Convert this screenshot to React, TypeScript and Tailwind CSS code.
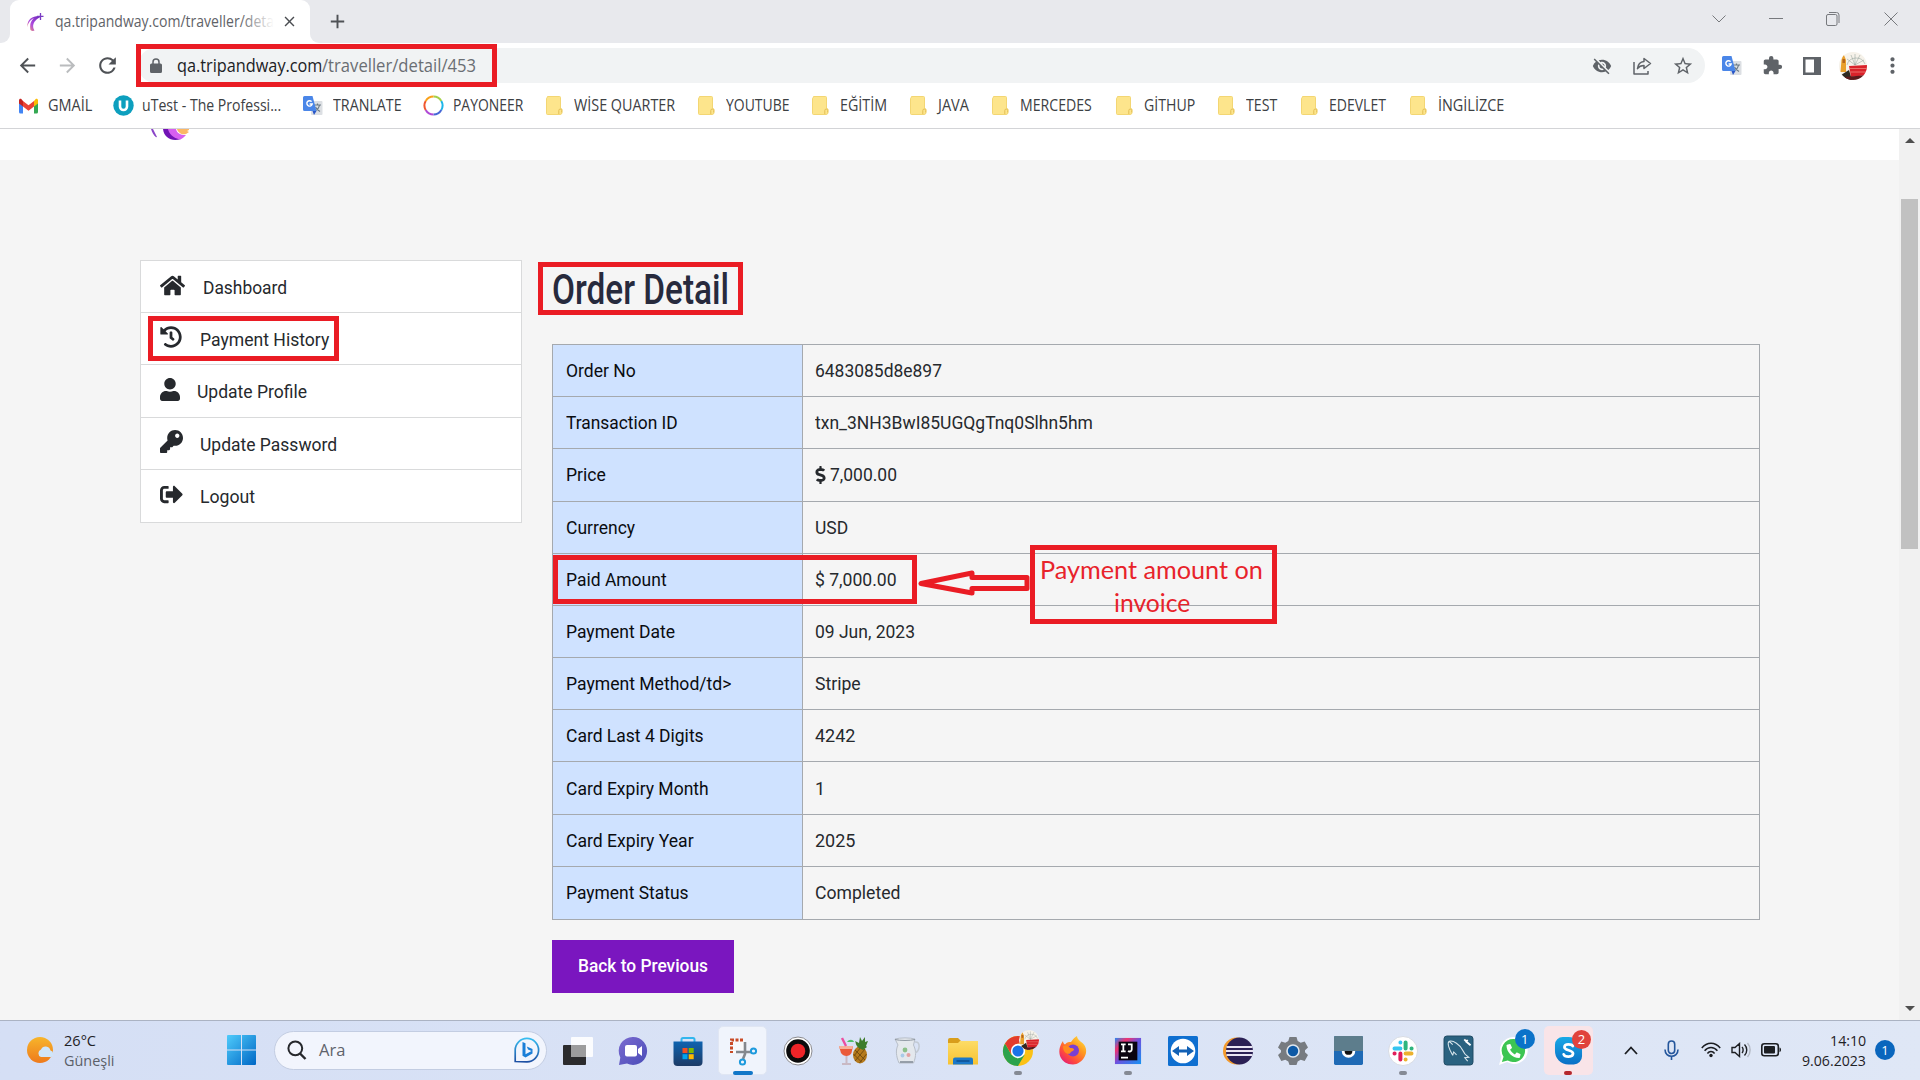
import React, { useLayoutEffect, useRef, type ReactNode } from "react";
import {
  MdArrowBack, MdArrowForward, MdRefresh, MdLock, MdVisibilityOff, MdStarBorder,
  MdExtension, MdMoreVert, MdClose, MdAdd,
} from "react-icons/md";
import { FaHome, FaHistory, FaUser, FaKey, FaSignOutAlt, FaDollarSign } from "react-icons/fa";

/** Single line of text condensed or widened to fill the width of its box. */
function Fit({ className, children }: { className: string; children: ReactNode }) {
  const outer = useRef<HTMLSpanElement>(null);
  const inner = useRef<HTMLSpanElement>(null);
  useLayoutEffect(() => {
    const fit = () => {
      if (!outer.current || !inner.current) return;
      const ratio = outer.current.clientWidth / inner.current.offsetWidth;
      inner.current.style.transform = `scaleX(${ratio})`;
    };
    fit();
    document.fonts?.ready.then(fit);
  }, []);
  return (
    <span ref={outer} className={"block shrink-0 whitespace-nowrap " + className}>
      <span ref={inner} className="inline-block origin-left">{children}</span>
    </span>
  );
}

const SEGOE = "font-['Open_Sans',sans-serif]";

function TranslateIcon() {
  return (
    <svg width="20" height="20" viewBox="0 0 20 20">
      <rect x="8" y="5" width="11.5" height="14" rx="1" fill="#dcdfe3" />
      <path d="M11 9h7M14.500 7.500v1.500M16.500 9c-.6 3-2.400 5-4.500 6M12.500 11c1 2 2.500 3.500 4.500 4.500" stroke="#6b7a86" strokeWidth="1.200" fill="none" />
      <path d="M1.500 0h8l4 15H1.500A1.500 1.500 0 0 1 0 13.500v-12A1.500 1.500 0 0 1 1.500 0z" fill="#4a86e8" />
      <path d="M9.500 15h4l-2.500 4z" fill="#2a56c6" />
      <path d="M8.600 5.600A2.700 2.700 0 1 0 9.200 8H6.600" stroke="#fff" strokeWidth="1.400" fill="none" />
    </svg>
  );
}

function FolderIcon() {
  return (
    <svg width="17" height="19" viewBox="0 0 17 19">
      <path d="M1.500.5h12a1 1 0 0 1 1 1v11l1.500.5v3.500a2 2 0 0 1-2 2H1.500a1 1 0 0 1-1-1v-15a1 1 0 0 1 1-1z" fill="#fde58c" stroke="#f3d673" />
      <path d="M12.800 18v-3.500a1.400 1.400 0 0 1 2.900 0v2" fill="#fde58c" stroke="#e3be55" />
    </svg>
  );
}

function GmailIcon() {
  return (
    <svg width="19" height="16" viewBox="0 0 19 16">
      <path d="M0 2v12a1.500 1.500 0 0 0 1.500 1.500H4V6z" fill="#4285f4" />
      <path d="M19 2v12a1.500 1.500 0 0 1-1.500 1.500H15V6z" fill="#34a853" />
      <path d="M4 3v5.500l5.500 4.200L15 8.500V3L9.500 7.200z" fill="#ea4335" />
      <path d="M0 2.500v3L4 8.500V3L2.500 1.200C1.400.4 0 1 0 2.500z" fill="#c5221f" />
      <path d="M19 2.500v3L15 8.500V3l1.500-1.800C17.600.4 19 1 19 2.500z" fill="#fbbc04" />
    </svg>
  );
}

function UTestIcon() {
  return (
    <svg width="21" height="21" viewBox="0 0 21 21">
      <circle cx="10.500" cy="10.500" r="10.200" fill="#0d9fbe" />
      <path d="M7 5.500v6a3.500 3.500 0 0 0 7 0v-6" fill="none" stroke="#fff" strokeWidth="2.600" />
    </svg>
  );
}

function PayoneerIcon() {
  return (
    <svg width="21" height="21" viewBox="0 0 21 21" fill="none" strokeWidth="2">
      <path d="M10.500 1.500a9 9 0 0 1 7.800 4.500" stroke="#a4d04a" />
      <path d="M18.300 6a9 9 0 0 1 0 9" stroke="#1cb6e8" />
      <path d="M18.300 15a9 9 0 0 1-7.800 4.500" stroke="#4667d6" />
      <path d="M10.500 19.500A9 9 0 0 1 2.700 15" stroke="#b04ad6" />
      <path d="M2.700 15a9 9 0 0 1 0-9" stroke="#f0562e" />
      <path d="M2.700 6a9 9 0 0 1 7.800-4.500" stroke="#f9a11b" />
    </svg>
  );
}

function Favicon() {
  return (
    <svg width="17" height="18" viewBox="0 0 17 18">
      <defs>
        <linearGradient id="fav" x1="1" y1="0" x2="0" y2="1">
          <stop offset="0" stopColor="#6a25b8" /><stop offset=".6" stopColor="#b04be0" /><stop offset="1" stopColor="#f6a05c" />
        </linearGradient>
      </defs>
      <path d="M13 3C6 2.500 0 6 .3 14c1.200-5 3.500-7.500 6.500-8.800C3.500 8 2.500 12 3.500 17c1 1 2.800 1.200 4 .6C5 14 5.500 8 13 4.200z" fill="url(#fav)" />
      <path d="M13.500 0v7M10 3.300h6.500" stroke="#7a3cc4" strokeWidth="1.300" />
    </svg>
  );
}

function Avatar({ className }: { className: string }) {
  return (
    <svg className={className} viewBox="0 0 28 28">
      <defs><clipPath id="av"><circle cx="14" cy="14" r="14" /></clipPath></defs>
      <g clipPath="url(#av)">
        <rect width="28" height="28" fill="#f6f2ea" />
        <g stroke="#8b9a94" strokeWidth=".5" fill="none">
          <path d="M8 13A9.500 9.500 0 0 1 26 12M16 13 12 3M16 13 16 2M16 13 21 3M16 13 25 8M16 13 8 7" />
        </g>
        <path d="M2.500 8l2-6 2.500 6v12H1.500z" fill="#e9a02c" />
        <rect x="3.500" y="7" width="2.500" height="4" fill="#b5651d" />
        <path d="M2 23l8-5 3 10H2z" fill="#2e2a22" />
        <path d="M10 14l18-1v10l-16 2z" fill="#d9222a" />
        <path d="M11 16.500h17M11 20h17" stroke="#f08078" strokeWidth=".8" />
        <path d="M6 25l22-2v5H6z" fill="#5c1a1c" />
      </g>
    </svg>
  );
}

const folders: [string, string, string][] = [
  ["WİSE QUARTER", "w-[152px]", "w-[101px]"],
  ["YOUTUBE", "w-[114px]", "w-[63px]"],
  ["EĞİTİM", "w-[98px]", "w-[47px]"],
  ["JAVA", "w-[82px]", "w-[31px]"],
  ["MERCEDES", "w-[124px]", "w-[72px]"],
  ["GİTHUP", "w-[102px]", "w-[51px]"],
  ["TEST", "w-[83px]", "w-[31px]"],
  ["EDEVLET", "w-[109px]", "w-[57px]"],
  ["İNGİLİZCE", "w-[94px]", "w-[66px]"],
];

function Bookmark({ icon, label, slot, text, iconBox }: { icon: ReactNode; label: string; slot: string; text: string; iconBox: string }) {
  return (
    <div className={"flex h-[25px] shrink-0 items-center " + slot}>
      <span className={"shrink-0 " + iconBox}>{icon}</span>
      <Fit className={text}>{label}</Fit>
    </div>
  );
}

function Browser() {
  return (
    <header className={"relative " + SEGOE}>
      <div className="flex h-[43px] bg-[#e8e9ed]">
        <div className="flex h-full w-[10px] flex-col justify-end bg-white"><div className="h-full w-full rounded-br-[9px] bg-[#e8e9ed]" /></div>
        <div className="flex h-full w-[300px] items-center rounded-t-[9px] bg-white pl-[17px]">
          <Favicon />
          <div className="relative -mt-[2px] ml-[11px] w-[219px] overflow-hidden text-[15.5px] leading-[22px] text-[#5f6368]">
            <Fit className="w-[219px]">qa.tripandway.com/traveller/deta</Fit>
            <div className="absolute inset-y-0 right-0 w-[34px] bg-linear-to-r from-white/0 to-white" />
          </div>
          <MdClose className="ml-[7px] size-[17px] text-[#4a4d51]" />
        </div>
        <div className="h-full w-[10px] bg-white"><div className="h-full w-full rounded-bl-[9px] bg-[#e8e9ed]" /></div>
        <MdAdd className="mt-[10px] ml-[6px] size-[23px] text-[#4f5256]" />
        <div className="ml-auto flex h-[37px] items-center text-[#77797d]">
          <svg width="14" height="8" viewBox="0 0 14 8" className="mr-[43px]" fill="none" stroke="currentColor"><path d="M.5.500 7 7 13.500.500" /></svg>
          <svg width="14" height="2" viewBox="0 0 14 2" className="mr-[43px]" fill="none" stroke="currentColor"><path d="M0 .5h14" /></svg>
          <svg width="14" height="14" viewBox="0 0 14 14" className="mr-[44px]" fill="none" stroke="currentColor"><rect x=".5" y="2.500" width="10.500" height="11" rx="1.500" /><path d="M3 .5h7.500a2.500 2.500 0 0 1 2.500 2.500v8" /></svg>
          <svg width="14" height="14" viewBox="0 0 14 14" className="mr-[22px]" fill="none" stroke="currentColor"><path d="M.5.500l13 13M13.500.500l-13 13" /></svg>
        </div>
      </div>
      <div className="flex h-[45px] items-center bg-white pl-[16px] text-[#5f6368]">
        <MdArrowBack className="size-[23px] text-[#4f5256]" />
        <MdArrowForward className="ml-[17px] size-[23px] text-[#babcbe]" />
        <MdRefresh className="ml-[16px] size-[25px] text-[#4f5256]" />
        <div className="ml-[18px] flex h-[35px] w-[1567px] items-center rounded-full bg-[#f1f3f4] pl-[11px]">
          <svg width="12" height="15" viewBox="0 0 12 15" className="mr-[2px] ml-px"><path d="M1.500 5.500h9A1.500 1.500 0 0 1 12 7v6.500a1.500 1.500 0 0 1-1.500 1.500h-9A1.500 1.500 0 0 1 0 13.500V7a1.500 1.500 0 0 1 1.500-1.500z" fill="#5f6368" /><path d="M3 6V4a3 3 0 0 1 6 0v2" fill="none" stroke="#5f6368" strokeWidth="1.500" /></svg>
          <div className="-mt-px ml-[13px] flex w-[300px] text-[17.5px] leading-[24px]">
            <Fit className="w-[145px] text-[#202124]">qa.tripandway.com</Fit>
            <Fit className="w-[154px] text-[#6a6e73]">/traveller/detail/453</Fit>
          </div>
          <div className="ml-auto flex items-center">
            <MdVisibilityOff className="mr-[21px] size-[20px]" />
            <svg width="19" height="18" viewBox="0 0 19 18" fill="none" stroke="currentColor" strokeWidth="1.500" className="mr-[20px]">
              <path d="M1 5v12h14v-3M11 1.500l6.500 5-6.500 5V8.600c-3 0-5 1-6.500 3C5 7.500 7.200 5 11 4.600z" strokeLinejoin="round" />
            </svg>
            <MdStarBorder className="mr-[11px] size-[22px]" />
          </div>
        </div>
        <div className="ml-[17px]"><TranslateIcon /></div>
        <MdExtension className="ml-[20px] size-[21px]" />
        <svg width="18" height="18" viewBox="0 0 18 18" className="ml-[20px]"><path d="M0 0h18v18H0zM2.500 2.500v13H11v-13z" fill="#5f6368" fillRule="evenodd" /></svg>
        <Avatar className="ml-[18px] size-[28px]" />
        <MdMoreVert className="ml-[13px] size-[25px]" />
      </div>
      <div className="flex h-[41px] items-start border-b border-[#d3d4d7] bg-white pt-[5px] pl-[19px] text-[15.5px] leading-[25px] text-[#3c4043]">
        <Bookmark icon={<GmailIcon />} label="GMAİL" slot="w-[94px]" text="w-[44px]" iconBox="w-[29px]" />
        <Bookmark icon={<UTestIcon />} label="uTest - The Professi..." slot="w-[190px]" text="w-[139px]" iconBox="w-[29px]" />
        <Bookmark icon={<TranslateIcon />} label="TRANLATE" slot="w-[120px]" text="w-[69px]" iconBox="w-[30px]" />
        <Bookmark icon={<PayoneerIcon />} label="PAYONEER" slot="w-[123px]" text="w-[70px]" iconBox="w-[30px]" />
        {folders.map(([label, slot, text]) => (
          <Bookmark key={label} icon={<FolderIcon />} label={label} slot={slot} text={text} iconBox="w-[28px]" />
        ))}
      </div>
      <div className="absolute top-[44px] left-[136px] h-[43px] w-[361px] border-5 border-[#ea1c24]" />
    </header>
  );
}

const menu: { label: string; icon: ReactNode; text: string }[] = [
  { label: "Dashboard", icon: <FaHome className="h-[23px] w-[25px]" />, text: "ml-[18px] w-[84px]" },
  { label: "Payment History", icon: <FaHistory className="size-[22px]" />, text: "ml-[18px] w-[129px]" },
  { label: "Update Profile", icon: <FaUser className="h-[23px] w-[20px]" />, text: "ml-[17px] w-[110px]" },
  { label: "Update Password", icon: <FaKey className="size-[23px]" />, text: "ml-[17px] w-[137px]" },
  { label: "Logout", icon: <FaSignOutAlt className="size-[23px]" />, text: "ml-[17px] w-[55px]" },
];

const rows: { label: string; lw: string; value: ReactNode }[] = [
  { label: "Order No", lw: "w-[70px]", value: <Fit className="w-[127px]">6483085d8e897</Fit> },
  { label: "Transaction ID", lw: "w-[112px]", value: <Fit className="w-[278px]">txn_3NH3BwI85UGQgTnq0Slhn5hm</Fit> },
  { label: "Price", lw: "w-[40px]", value: <div className="flex items-center"><FaDollarSign className="mr-[4px] h-[18px] w-[11px]" /><Fit className="w-[67px]">7,000.00</Fit></div> },
  { label: "Currency", lw: "w-[69px]", value: <Fit className="w-[33px]">USD</Fit> },
  { label: "Paid Amount", lw: "w-[101px]", value: <Fit className="w-[82px]">$ 7,000.00</Fit> },
  { label: "Payment Date", lw: "w-[109px]", value: <Fit className="w-[100px]">09 Jun, 2023</Fit> },
  { label: "Payment Method/td>", lw: "w-[165px]", value: <Fit className="w-[46px]">Stripe</Fit> },
  { label: "Card Last 4 Digits", lw: "w-[138px]", value: <Fit className="w-[40px]">4242</Fit> },
  { label: "Card Expiry Month", lw: "w-[143px]", value: "1" },
  { label: "Card Expiry Year", lw: "w-[128px]", value: <Fit className="w-[40px]">2025</Fit> },
  { label: "Payment Status", lw: "w-[123px]", value: <Fit className="w-[85px]">Completed</Fit> },
];

function Page() {
  return (
    <div className="relative flex h-[891px] bg-[#f5f5f5] font-[Roboto,sans-serif] text-[18px] leading-[27px]">
      <div className="w-[1899px]">
        <div className="h-[31px] bg-white pl-[151px]">
          <svg width="42" height="12" viewBox="0 0 42 12">
            <path d="M0 0h2l4 8-1 .3C2.500 6 1 3 0 0z" fill="#8a45c8" />
            <path d="M12 0h8c0 5 3 8 10 10-9 3-17-1-18-10z" fill="#7113b4" />
            <path d="M17 0h8c1 4 4 6 10 6-2 2-3.500 3.500-6 4.500C22 9 18 5 17 0z" fill="#d75ff0" />
            <path d="M26 0h12v1l-2 1 2 1-3 2c-4 1-8-1-9-5z" fill="#fbb765" />
          </svg>
        </div>
        <div className="flex pt-[100px] pl-[140px]">
          <nav className="relative h-[263px] w-[382px] border border-[#d9dadb] bg-white text-[#26292d]">
            <div className="grid h-full grid-rows-5 divide-y divide-[#d9dadb]">
              {menu.map((m) => (
                <div key={m.label} className="flex items-center pl-[19px]">
                  <span className="-mt-[3px] shrink-0">{m.icon}</span>
                  <Fit className={"mt-[2px] " + m.text}>{m.label}</Fit>
                </div>
              ))}
            </div>
            <div className="absolute top-[55px] left-[7px] h-[45px] w-[191px] border-5 border-[#ea1c24]" />
          </nav>
          <main className="relative ml-[30px] w-[1208px]">
            <h1 className="flex h-[84px] pt-[5px] text-[43px] leading-[48px] font-medium text-[#272a3d]"><Fit className="w-[177px]">Order Detail</Fit></h1>
            <div className="grid h-[576px] grid-rows-11 divide-y divide-[#a5a9ae] border border-[#a5a9ae]">
              {rows.map((r) => (
                <div key={r.label} className="flex">
                  <div className="flex w-[250px] items-center border-r border-[#a5a9ae] bg-[#cfe2ff] pl-[12.5px] text-[#0a0c10]"><Fit className={r.lw}>{r.label}</Fit></div>
                  <div className="flex items-center pl-[12px] text-[#26292d]">{r.value}</div>
                </div>
              ))}
            </div>
            <button className="mt-[20px] flex h-[53px] w-[182px] items-center justify-center bg-[#7a16bf] pb-[2px] font-medium text-white"><Fit className="w-[130px]">Back to Previous</Fit></button>
            <div className="absolute top-[2px] -left-[14px] h-[53px] w-[205px] border-5 border-[#ea1c24]" />
            <div className="absolute top-[295px] left-[1px] h-[49px] w-[364px] border-5 border-[#ea1c24]" />
            <svg className="absolute top-[308px] left-[363px]" width="116" height="30" viewBox="0 0 116 30">
              <path d="M6 15.500 57 5v4.500H112v11H57v4.500z" fill="none" stroke="#ea1c24" strokeWidth="5" strokeLinejoin="round" />
            </svg>
            <div className="absolute top-[285px] left-[478px] flex h-[79px] w-[247px] flex-col items-center border-5 border-[#ea1c24] pt-[3px] pr-[4px] font-[Lato,sans-serif] text-[25px] leading-[33px] text-[#e8232b]">
              <Fit className="w-[223px]">Payment amount on</Fit>
              <Fit className="w-[76px]">invoice</Fit>
            </div>
          </main>
        </div>
      </div>
      <div className="flex w-[21px] flex-col items-center bg-[#f1f1f1]">
        <svg width="10" height="5" viewBox="0 0 10 5" className="mt-[9px]"><path d="M0 5 5 0l5 5z" fill="#4f4f4f" /></svg>
        <div className="mt-[56px] h-[350px] w-[17px] bg-[#c1c1c1]" />
        <svg width="10" height="5" viewBox="0 0 10 5" className="mt-auto mb-[9px]"><path d="M0 0l5 5 5-5z" fill="#4f4f4f" /></svg>
      </div>
    </div>
  );
}

const I = ({ children, s = 30 }: { children: ReactNode; s?: number }) => (
  <svg width={s} height={s} viewBox="0 0 30 30" className="overflow-visible">{children}</svg>
);

const apps: { name: string; icon: ReactNode; bar?: string; tile?: string }[] = [
  { name: "taskview", icon: <I><rect y="9" width="23" height="20" rx="1" fill="#2b2b2d" /><rect x="8" y="1" width="22" height="20" rx="1" fill="#fff" opacity=".9" /><rect x="8" y="9" width="15" height="12" fill="#9c9c9d" /></I> },
  { name: "chat", icon: <I><defs><linearGradient id="ch" x2="1" y2="1"><stop stopColor="#7b6bd0" /><stop offset="1" stopColor="#4a4cb8" /></linearGradient></defs><path d="M15 1a14 14 0 1 1-6 26.600L1 29l1.300-7.500A14 14 0 0 1 15 1z" fill="url(#ch)" /><rect x="7" y="9" width="12" height="11.500" rx="2" fill="#fff" /><path d="M20 13l4-3v10l-4-3z" fill="#fff" /></I> },
  { name: "store", icon: <I><path d="M8.500 7V3.500A1.500 1.500 0 0 1 10 2h10a1.500 1.500 0 0 1 1.500 1.500V7" fill="none" stroke="#32b6ee" strokeWidth="2" /><defs><linearGradient id="st" x2="0" y2="1"><stop stopColor="#0f63b0" /><stop offset="1" stopColor="#1d3b66" /></linearGradient></defs><path d="M.5 5.500h29V26a4 4 0 0 1-4 4h-21a4 4 0 0 1-4-4z" fill="url(#st)" /><path d="M9.500 12h5v5h-5z" fill="#f25022" /><path d="M15.700 12h5v5h-5z" fill="#7fba00" /><path d="M9.500 18.200h5v5h-5z" fill="#00a4ef" /><path d="M15.700 18.200h5v5h-5z" fill="#ffb900" /></I> },
  { name: "snip", tile: "bg-[#f0f4fc] border border-[#e0e6f3]", bar: "w-[20px] bg-[#1277c8]", icon: <I><rect x="4" y="4" width="13" height="13" fill="#f9f9fb" /><path d="M15 4H3.500v13" fill="none" stroke="#c94b26" strokeWidth="3" strokeDasharray="3 1.500" /><path d="M17 6v12l-2 5M8 16h15" stroke="#84888e" fill="none" strokeWidth="2.600" /><circle cx="25.500" cy="15" r="2.600" fill="none" stroke="#1d9add" strokeWidth="2" /><circle cx="14.500" cy="26" r="2.600" fill="none" stroke="#1d9add" strokeWidth="2" /></I> },
  { name: "record", icon: <I><circle cx="15" cy="15" r="14" fill="#fff" stroke="#8c8c90" /><circle cx="15" cy="15" r="11.800" fill="#0b0b0b" /><circle cx="15" cy="15" r="7.300" fill="#ee2428" /></I> },
  { name: "fruit", icon: <I><ellipse cx="22" cy="19" rx="7" ry="8.500" fill="#b57a1c" /><path d="M17 14l10 10M15.500 18l8 8M27 13 17 25M23 11l-7 9M28.500 18l-7 9" stroke="#6f4a10" strokeWidth=".9" /><path d="M21 12c-4-3-3-6-4-7l4 2 1-6 2 4 3-4v5l3-1-2 5 1 1-4 3z" fill="#3e7d2c" /><path d="M1 10h14l-1.500 7c-2 4-8 4-10.500 0z" fill="#ea5a3a" /><path d="M1 10h14l-.8 3H1.800z" fill="#f7b29a" /><path d="M8.500 20v7M4 28h9" stroke="#c9b9c4" strokeWidth="2" /><path d="M8 10 4 2" stroke="#ec4fa0" strokeWidth="2.400" /><path d="M9 6c2-3 6-3 7 0z" fill="#4fc16b" /></I> },
  { name: "jug", icon: <I><path d="M2 3c5-1.500 15-1.500 20 0l-1.500 6c2.500 5 3 11 0 18H6C3 20 2.500 14 5 9z" fill="#e4e8ed" stroke="#b7bec8" strokeWidth="1" /><path d="M2 3.500c5 1.300 15 1.300 20 0" fill="none" stroke="#8f98a3" strokeWidth="1" /><path d="M22 6c6-1 5 9 0 11" fill="none" stroke="#c3cad3" strokeWidth="1.500" /><circle cx="12" cy="14" r="2.400" fill="#8cc08a" /><circle cx="15.500" cy="19" r="2" fill="#e3a0a0" /><circle cx="9.500" cy="19.500" r="1.900" fill="#a9cbe8" /><path d="M7 26h13" stroke="#8e97a2" strokeWidth="1.800" /></I> },
  { name: "files", icon: <I><path d="M0 4a2 2 0 0 1 2-2h8l3 3v5H0z" fill="#d99e1b" /><defs><linearGradient id="fl" x2="0" y2="1"><stop stopColor="#fddc66" /><stop offset="1" stopColor="#f7c232" /></linearGradient></defs><path d="M0 7h10l2-2h18v23.500H0z" fill="url(#fl)" /><path d="M5 28.500v-5a2 2 0 0 1 2-2h16a2 2 0 0 1 2 2v5z" fill="#1b78c9" /><path d="M8.500 25h13" stroke="#0e4f91" strokeWidth="1.500" /></I> },
  { name: "chrome", bar: "w-[8px] bg-[#858a94]", icon: <div className="relative"><I><circle cx="15" cy="15" r="15" fill="#fbc116" /><path d="M2 7.500A15 15 0 0 0 15 30l6.500-11L8.500 19z" fill="#2ba24c" /><path d="M2 7.500a15 15 0 0 1 26 0H15L8.500 18.500z" fill="#e33b2e" /><circle cx="15" cy="15" r="7.200" fill="#fff" /><circle cx="15" cy="15" r="5.600" fill="#1a73e8" /></I><Avatar className="absolute -top-[6px] -right-[6px] size-[20px]" /></div> },
  { name: "firefox", icon: <I><defs><linearGradient id="ff" x1="1" y1="0" x2=".2" y2="1"><stop stopColor="#fff04a" /><stop offset=".4" stopColor="#ff9a1f" /><stop offset=".75" stopColor="#ff4a3d" /><stop offset="1" stopColor="#e21c78" /></linearGradient></defs><path d="M5 5c0 2 1 3 2 3.500C9 6 11 6 13 6c2-3 4-5 6-6 0 3 3 5 6 7.500 8 8-.5 21-10 21C3 28.500-3 16 5 5z" fill="url(#ff)" /><circle cx="15" cy="14.500" r="6" fill="#7a3fd3" /><path d="M5 10c4-1.500 6 0 7 2 2 0 4 0 4 1.500s-3 1.500-4 4c-3 1-7-1-7-7.500z" fill="#ff8a1e" /></I> },
  { name: "intellij", bar: "w-[8px] bg-[#858a94]", icon: <I s={28}><defs><linearGradient id="ij" x2="1" y2="1"><stop stopColor="#2489f5" /><stop offset=".25" stopColor="#f0326e" /><stop offset=".5" stopColor="#6c52e0" /><stop offset="1" stopColor="#1593f2" /></linearGradient></defs><path d="M1 1h28v28H1z" fill="url(#ij)" /><path d="M5 5h20v20H5z" fill="#0a0410" /><path d="M7.500 8h5M10 8v7M7.500 15.500h5M15 8h4v5.500c0 2-2.500 2.500-4 1.500M7.500 22h7.500" stroke="#fff" strokeWidth="1.900" fill="none" /></I> },
  { name: "teamviewer", icon: <I><rect width="30" height="30" rx="1.500" fill="#0f6fd0" /><circle cx="15" cy="15" r="12.300" fill="#fff" /><path d="M4 15l7-5v3.400h8V10l7 5-7 5v-3.400h-8V20z" fill="#1261b5" /></I> },
  { name: "eclipse", icon: <I><circle cx="13.500" cy="15" r="13.500" fill="#f39a2c" /><circle cx="16.500" cy="15" r="13.500" fill="#2b2055" /><path d="M3.500 11h26M3 15h27M3.500 19h26" stroke="#e9e5f3" strokeWidth="1.900" /></I> },
  { name: "settings", icon: <I><path d="M11.500 1h7l1.200 4 3 1.700 4-1.200 3.300 6-3 2.700v2l3 2.700-3.300 6-4-1.200-3 1.700-1.200 3.600h-7l-1.200-3.600-3-1.700-4 1.200-3.300-6 3-2.700v-2l-3-2.700 3.300-6 4 1.200 3-1.700z" fill="#777b80" /><circle cx="15" cy="15" r="6" fill="#0e59a5" stroke="#dfe6ee" strokeWidth="1.600" /></I> },
  { name: "owl", icon: <I s={29}><rect width="30" height="30" rx="1.500" fill="#1f6ab5" /><path d="M0 15.500V1.500A1.500 1.500 0 0 1 1.500 0h27A1.500 1.500 0 0 1 30 1.500v14z" fill="#5d7d8c" /><path d="M8 15.500a7 7 0 0 0 14 0z" fill="#fff" /><path d="M11 15.500a4 4 0 0 0 8 0z" fill="#111" /></I> },
  { name: "slack", bar: "w-[8px] bg-[#858a94]", icon: <I><circle cx="15" cy="15" r="14.500" fill="#fff" stroke="#d2d6dd" strokeWidth=".8" /><g strokeWidth="4" strokeLinecap="round"><path d="M12.400 6.500v.1M6.500 12.400h5.900" stroke="#36c5f0" /><path d="M17.600 6.500v5.900M23.500 12.400h.1" stroke="#2eb67d" /><path d="M17.600 17.600h5.900M17.600 23.500v.1" stroke="#ecb22e" /><path d="M12.400 17.600v5.900M6.500 17.600h.1" stroke="#e01e5a" /></g></I> },
  { name: "mysql", icon: <I s={29}><rect width="30" height="30" rx="3" fill="#2a6280" stroke="#1f4b63" /><path d="M9 20C5 13 3 7 5.500 5.500 9 4 17 9 19.500 15c1 3 2.500 4.500 6 7l-4 .5 3 3.500M9 20l1-3.500 3 3M5.500 5.500 9 9" fill="none" stroke="#d9e6ec" strokeWidth="1.100" /><path d="M21 3.500l2 2 1.500-1.500M22.500 5.500l5 4" stroke="#fff" strokeWidth="2" /></I> },
  { name: "whatsapp", icon: <div className="relative"><I s={29}><path d="M15 1a14 14 0 1 1-6.500 26L0 30l2.500-8.500A14 14 0 0 1 15 1z" fill="#fff" /><path d="M15 3a12 12 0 1 1-6 22.400l-6 1.600 1.700-5.600A12 12 0 0 1 15 3z" fill="#3dc552" /></I><svg className="absolute top-[8px] left-[7px]" width="15" height="14" viewBox="0 0 512 512"><path d="M493 24 389 0c-11-3-23 3-27 14l-48 112c-4 10-1 21 7 28l61 50c-36 77-99 140-178 178l-50-61c-7-8-18-11-28-7L14 362C4 367-3 378 1 390l24 104c3 11 13 18 24 18 256 0 463-207 463-464 0-11-8-21-19-24z" fill="#fff" transform="matrix(-1 0 0 1 512 0)" /></svg><span className="absolute -top-[7px] -right-[7px] flex size-[20px] items-center justify-center rounded-full bg-[#0a72c9] text-[13px] leading-none text-white">1</span></div> },
  { name: "skype", tile: "bg-[#f9e4e8]", bar: "w-[8px] bg-[#b4262c]", icon: <div className="relative"><I s={29}><defs><linearGradient id="sk" x2="0" y2="1"><stop stopColor="#19a9e6" /><stop offset="1" stopColor="#0a6fc6" /></linearGradient></defs><path d="M9 1h6a14 14 0 0 1 14 15v5a8.500 8.500 0 0 1-8.500 8.500H15A14 14 0 0 1 1 15V9a8 8 0 0 1 8-8z" fill="url(#sk)" /><path d="M19.500 10.500C18.500 8.500 11 7.500 10.800 11.500c-.2 4 8.900 2.500 8.900 6.700s-8.500 4-9.700.8" fill="none" stroke="#fff" strokeWidth="2.800" strokeLinecap="round" /></I><span className="absolute -top-[6px] -right-[8px] flex size-[19px] items-center justify-center rounded-full bg-[#e0433c] text-[13px] leading-none text-white">2</span></div> },
];

function Taskbar() {
  return (
    <footer className={"flex h-[60px] items-center border-t border-[#abb3c3] bg-linear-to-r from-[#d5dff5] to-[#dfe7f6] pb-px " + SEGOE}>
      <svg width="29" height="28" viewBox="0 0 29 28" className="ml-[27px]">
        <defs><linearGradient id="sun" x2="0" y2="1"><stop stopColor="#f7b52b" /><stop offset="1" stopColor="#ee7a1c" /></linearGradient></defs>
        <circle cx="13" cy="14" r="13" fill="url(#sun)" />
        <path d="M14 21a4 4 0 0 1 0-7.500 5 5 0 0 1 9.500 1A3.400 3.400 0 0 1 24 21z" fill="#cfe6fa" />
      </svg>
      <div className="-mt-px ml-[8px] flex flex-col text-[15px] leading-[20px]">
        <Fit className="w-[32px] text-[#1f2226]">26°C</Fit>
        <Fit className="w-[50px] text-[#5b6068]">Güneşli</Fit>
      </div>
      <svg width="29" height="30" viewBox="0 0 29 30" className="ml-[113px]">
        <defs><linearGradient id="win" x2="1" y2="1"><stop stopColor="#4fcbfb" /><stop offset="1" stopColor="#0067c5" /></linearGradient></defs>
        <path d="M0 1a1 1 0 0 1 1-1h13v14.500H0zM15 0h13a1 1 0 0 1 1 1v13.500H15zM0 15.500h14V30H1a1 1 0 0 1-1-1zM15 15.500h14V29a1 1 0 0 1-1 1H15z" fill="url(#win)" />
      </svg>
      <div className="ml-[18px] flex h-[39px] w-[273px] items-center rounded-full border border-[#c3cde2] bg-[#f2f5fd] pl-[12px]">
        <svg width="20" height="20" viewBox="0 0 20 20" fill="none" stroke="#26282c" strokeWidth="2"><circle cx="8.300" cy="8.300" r="6.900" /><path d="M13 13.500l5.500 5.500" strokeWidth="2.400" /></svg>
        <Fit className="ml-[12px] w-[26px] text-[16.5px] text-[#5f636b]">Ara</Fit>
        <svg width="26" height="26" viewBox="0 0 26 26" className="mr-[6px] ml-auto">
          <defs><linearGradient id="bi" x2="0" y2="1"><stop stopColor="#38bdf0" /><stop offset="1" stopColor="#1d4fa3" /></linearGradient></defs>
          <path d="M1.200 24.500V13A11.700 11.700 0 1 1 13 24.800z" fill="none" stroke="url(#bi)" strokeWidth="1.700" />
          <path d="M8.500 5l3 1.300v11l6-3.300-3.500-1.500-1.200-3 5.700 2.500v4.500l-7 4-3-1.800z" fill="#1b7fd8" />
        </svg>
      </div>
      <div className="ml-[3px] -mb-px flex h-[59px] w-[1046px] shrink-0">
        {apps.map((a) => (
          <div key={a.name} className="relative flex flex-1 justify-center">
            <div className={"relative mt-[5px] flex h-[49px] w-[49px] items-center justify-center rounded-[5px] " + (a.tile ?? "")}>
              {a.icon}
            </div>
            {a.bar && <div className={"absolute bottom-[5px] h-[4px] rounded-full " + a.bar} />}
          </div>
        ))}
      </div>
      <div className="ml-[28px] flex items-center text-[#1c1e22]">
        <svg width="14" height="9" viewBox="0 0 14 9" fill="none" stroke="currentColor" strokeWidth="1.800"><path d="M1 8l6-6.500L13 8" /></svg>
        <svg width="15" height="20" viewBox="0 0 15 20" fill="none" stroke="#24569c" strokeWidth="1.600" className="ml-[26px]"><rect x="4.300" y="1" width="6.400" height="12.500" rx="3.200" /><path d="M1 9.500c0 9 13 9 13 0M7.500 16.300V20" /></svg>
        <svg width="20" height="16" viewBox="0 0 20 16" fill="none" stroke="currentColor" strokeWidth="1.500" className="ml-[22px]"><path d="M.8 6C6-.4 14-.4 19.200 6M3.600 8.800c3.600-4.500 9.200-4.500 12.800 0M6.400 11.500c2-2.600 5.200-2.600 7.200 0" /><circle cx="10" cy="13.500" r="1.700" fill="currentColor" stroke="none" /></svg>
        <svg width="21" height="16" viewBox="0 0 21 16" fill="none" stroke="currentColor" strokeWidth="1.400" className="ml-[10px]"><path d="M1 5.500h3L8.500 1.500v13L4 10.500H1zM11 5c1.500 1.500 1.500 4.500 0 6M13.500 2.500c3 3 3 8 0 11" /><path d="M16.500 1c3.500 4 3.500 10 0 14" stroke="#b3b9c4" /></svg>
        <svg width="21" height="14" viewBox="0 0 21 14" className="ml-[9px]"><rect x=".8" y=".8" width="16.500" height="12" rx="2.500" fill="none" stroke="currentColor" strokeWidth="1.600" /><rect x="3" y="3" width="11" height="7.600" rx="1" fill="currentColor" /><path d="M18.500 4.500c2 .3 2 4.300 0 4.600z" fill="currentColor" /></svg>
      </div>
      <div className="-mt-px ml-[20px] flex w-[64px] flex-col items-end text-[15px] leading-[20px] text-[#1f2226]">
        <Fit className="w-[36px]">14:10</Fit>
        <Fit className="w-[64px]">9.06.2023</Fit>
      </div>
      <div className="ml-[9px] flex size-[20px] items-center justify-center rounded-full bg-[#0a66bd] text-[13px] leading-none text-white">1</div>
    </footer>
  );
}

export default function App() {
  return (
    <div className="h-[1080px] w-[1920px] overflow-hidden bg-white">
      <Browser />
      <Page />
      <Taskbar />
    </div>
  );
}
